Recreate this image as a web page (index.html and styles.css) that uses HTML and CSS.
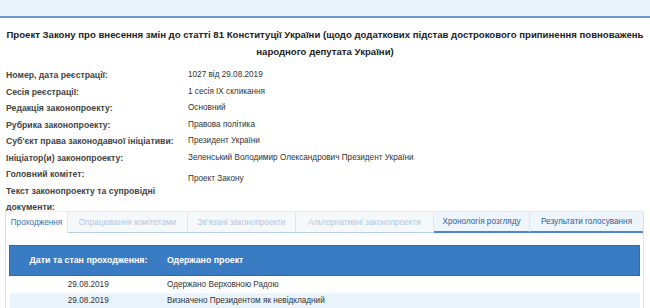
FILE: index.html
```html
<!DOCTYPE html>
<html lang="uk">
<head>
  <meta charset="UTF-8" />
  <title>Картка законопроекту</title>
  <link rel="stylesheet" href="styles.css">
</head>
<body>

<div class="topbar"></div>

<h1 class="title">Проект Закону про внесення змін до статті 81 Конституції України (щодо додаткових підстав дострокового припинення повноважень народного депутата України)</h1>

<div class="card">
  <div class="lbl">Номер, дата реєстрації:</div>
  <div class="val">1027 від 29.08.2019</div>

  <div class="lbl">Сесія реєстрації:</div>
  <div class="val">1 сесія IX скликання</div>

  <div class="lbl">Редакція законопроекту:</div>
  <div class="val">Основний</div>

  <div class="lbl">Рубрика законопроекту:</div>
  <div class="val">Правова політика</div>

  <div class="lbl">Суб'єкт права законодавчої ініціативи:</div>
  <div class="val">Президент України</div>

  <div class="lbl">Ініціатор(и) законопроекту:</div>
  <div class="val">Зеленський Володимир Олександрович Президент України</div>

  <div class="lbl">Головний комітет:</div>
  <div class="val"></div>

  <div class="lbl lbl-narrow">Текст законопроекту та супровідні документи:</div>
  <div class="val val-up">Проект Закону</div>
</div>

<div class="panel">
  <ul class="tabs">
    <li class="tab active t1">Проходження</li>
    <li class="tab off t2">Опрацювання комітетами</li>
    <li class="tab off t3">Зв'язані законопроекти</li>
    <li class="tab off t4">Альтернативні законопроекти</li>
    <li class="tab on t5">Хронологія розгляду</li>
    <li class="tab on t6">Результати голосування</li>
  </ul>

  <table class="flow">
    <thead>
      <tr>
        <th class="c-date">Дати та стан проходження:</th>
        <th class="c-text">Одержано проект</th>
      </tr>
    </thead>
    <tbody>
      <tr>
        <td class="c-date">29.08.2019</td>
        <td class="c-text">Одержано Верховною Радою</td>
      </tr>
      <tr class="alt">
        <td class="c-date">29.08.2019</td>
        <td class="c-text">Визначено Президентом як невідкладний</td>
      </tr>
    </tbody>
  </table>
</div>

</body>
</html>
```

FILE: styles.css
```css
:root {
  --text: #333;
  --label: #444;
  --blue: #3a7cc3;
  --blue-dark: #2d6aae;
  --light-blue: #e9f3fc;
}
body {
  margin: 0;
  background: #fff;
  color: var(--text);
  font-family: 'Liberation Sans', Arial, sans-serif;
  font-size: 8.2px;
}
.topbar {
  height: 16px;
  background: var(--light-blue);
  border-bottom: 2px solid #6e9ad0;
}
.title {
  margin: 8px 1px 0;
  font-size: 9.6px;
  line-height: 17px;
  font-weight: bold;
  text-align: center;
  color: #222;
}
.card {
  display: grid;
  grid-template-columns: 182px 1fr;
  margin: 7px 6px 0;
  line-height: 16.5px;
}
.lbl {
  font-size: 8.7px;
  font-weight: bold;
  color: var(--label);
}
.lbl-narrow {
  max-width: 165px;
}
.val {
  color: var(--text);
}
.val-up {
  margin-top: -12px;
}
.panel {
  margin: -5px 6px 0 5px;
  border: 1px solid #e2e2e2;
  border-top: none;
  padding-bottom: 2px;
}
.tabs {
  display: flex;
  margin: 0 0 12px;
  padding: 0;
  list-style: none;
}
.tab {
  box-sizing: border-box;
  height: 22px;
  line-height: 21px;
  border-top: 1px solid #e4ebf2;
  border-right: 1px solid #dfe7ef;
  background: #f6f9fc;
  text-align: center;
  white-space: nowrap;
}
.t1 { width: 62px; }
.t2 { width: 120px; }
.t3 { width: 108px; }
.t4 { width: 138px; }
.t5 { width: 96px; }
.t6 { flex: 1; border-right: none; }
.tab.active {
  background: #fff;
  color: #3d6fa8;
  border-top-color: #eee;
  border-right-color: #e6e6e6;
}
.tab.off {
  color: #b3c6da;
  border-bottom: 1px solid #b8cfe8;
}
.tab.on {
  color: #2f5f98;
  background: #eef5fc;
  border-bottom: 2px solid #4a86c8;
  line-height: 20px;
}
.flow {
  width: calc(100% - 6px);
  margin-left: 3px;
  border-collapse: collapse;
}
.flow th {
  height: 29px;
  padding: 0;
  background: var(--blue);
  color: #fff;
  font-size: 8.8px;
  font-weight: bold;
  border-top: 1px solid var(--blue-dark);
  border-bottom: 1px solid var(--blue-dark);
}
.flow th:first-child { border-left: 1px solid var(--blue-dark); }
.flow th:last-child { border-right: 1px solid var(--blue-dark); }
.flow td {
  height: 16px;
  padding: 0;
}
.flow tbody tr:first-child td {
  height: 17px;
}
.flow .c-date {
  width: 157px;
  text-align: center;
}
.flow .c-text {
  text-align: left;
}
.flow tr.alt td {
  background: #eaf4fd;
}
```
